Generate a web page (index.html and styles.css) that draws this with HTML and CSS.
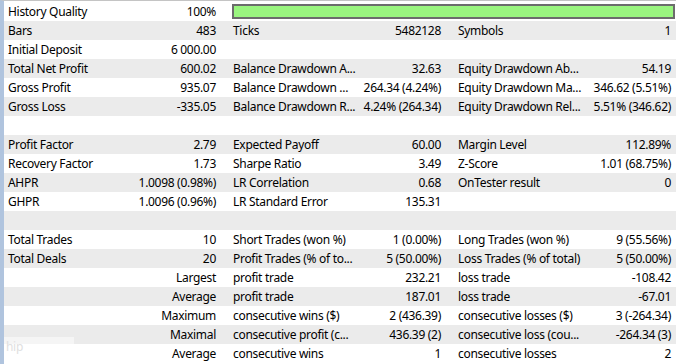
FILE: index.html
```html
<!DOCTYPE html>
<html>
<head>
<meta charset="utf-8">
<link rel="stylesheet" href="styles.css">
</head>
<body>
<div class="report">
  <div class="row">
    <div class="lbl">History Quality</div><div class="val">100%</div>
    <div class="quality"><div class="quality-fill" style="width:100%"></div></div>
  </div>
  <div class="row">
    <div class="lbl">Bars</div><div class="val">483</div>
    <div class="lbl">Ticks</div><div class="val">5482128</div>
    <div class="lbl">Symbols</div><div class="val last">1</div>
  </div>
  <div class="row">
    <div class="lbl">Initial Deposit</div><div class="val">6 000.00</div>
    <div class="lbl"></div><div class="val"></div>
    <div class="lbl"></div><div class="val last"></div>
  </div>
  <div class="row">
    <div class="lbl">Total Net Profit</div><div class="val">600.02</div>
    <div class="lbl">Balance Drawdown A...</div><div class="val">32.63</div>
    <div class="lbl">Equity Drawdown Ab...</div><div class="val last">54.19</div>
  </div>
  <div class="row">
    <div class="lbl">Gross Profit</div><div class="val">935.07</div>
    <div class="lbl">Balance Drawdown ...</div><div class="val">264.34 (4.24%)</div>
    <div class="lbl">Equity Drawdown Ma...</div><div class="val last">346.62 (5.51%)</div>
  </div>
  <div class="row">
    <div class="lbl">Gross Loss</div><div class="val">-335.05</div>
    <div class="lbl">Balance Drawdown R...</div><div class="val">4.24% (264.34)</div>
    <div class="lbl">Equity Drawdown Rel...</div><div class="val last">5.51% (346.62)</div>
  </div>
  <div class="row">
    <div class="lbl"></div><div class="val"></div>
    <div class="lbl"></div><div class="val"></div>
    <div class="lbl"></div><div class="val last"></div>
  </div>
  <div class="row">
    <div class="lbl">Profit Factor</div><div class="val">2.79</div>
    <div class="lbl">Expected Payoff</div><div class="val">60.00</div>
    <div class="lbl">Margin Level</div><div class="val last">112.89%</div>
  </div>
  <div class="row">
    <div class="lbl">Recovery Factor</div><div class="val">1.73</div>
    <div class="lbl">Sharpe Ratio</div><div class="val">3.49</div>
    <div class="lbl">Z-Score</div><div class="val last">1.01 (68.75%)</div>
  </div>
  <div class="row">
    <div class="lbl">AHPR</div><div class="val">1.0098 (0.98%)</div>
    <div class="lbl">LR Correlation</div><div class="val">0.68</div>
    <div class="lbl">OnTester result</div><div class="val last">0</div>
  </div>
  <div class="row">
    <div class="lbl">GHPR</div><div class="val">1.0096 (0.96%)</div>
    <div class="lbl">LR Standard Error</div><div class="val">135.31</div>
    <div class="lbl"></div><div class="val last"></div>
  </div>
  <div class="row">
    <div class="lbl"></div><div class="val"></div>
    <div class="lbl"></div><div class="val"></div>
    <div class="lbl"></div><div class="val last"></div>
  </div>
  <div class="row">
    <div class="lbl">Total Trades</div><div class="val">10</div>
    <div class="lbl">Short Trades (won %)</div><div class="val">1 (0.00%)</div>
    <div class="lbl">Long Trades (won %)</div><div class="val last">9 (55.56%)</div>
  </div>
  <div class="row">
    <div class="lbl">Total Deals</div><div class="val">20</div>
    <div class="lbl">Profit Trades (% of to...</div><div class="val">5 (50.00%)</div>
    <div class="lbl">Loss Trades (% of total)</div><div class="val last">5 (50.00%)</div>
  </div>
  <div class="row">
    <div class="lbl"></div><div class="val">Largest</div>
    <div class="lbl">profit trade</div><div class="val">232.21</div>
    <div class="lbl">loss trade</div><div class="val last">-108.42</div>
  </div>
  <div class="row">
    <div class="lbl"></div><div class="val">Average</div>
    <div class="lbl">profit trade</div><div class="val">187.01</div>
    <div class="lbl">loss trade</div><div class="val last">-67.01</div>
  </div>
  <div class="row">
    <div class="lbl"></div><div class="val">Maximum</div>
    <div class="lbl">consecutive wins ($)</div><div class="val">2 (436.39)</div>
    <div class="lbl">consecutive losses ($)</div><div class="val last">3 (-264.34)</div>
  </div>
  <div class="row">
    <div class="lbl"></div><div class="val">Maximal</div>
    <div class="lbl">consecutive profit (c...</div><div class="val">436.39 (2)</div>
    <div class="lbl">consecutive loss (cou...</div><div class="val last">-264.34 (3)</div>
  </div>
  <div class="row">
    <div class="lbl"></div><div class="val">Average</div>
    <div class="lbl">consecutive wins</div><div class="val">1</div>
    <div class="lbl">consecutive losses</div><div class="val last">2</div>
  </div>
  <div class="ghost">hip</div>
</div>
</body>
</html>
```
FILE: styles.css
```css
html, body {
  margin: 0;
  padding: 0;
  background: #ffffff;
}
body {
  width: 676px;
  height: 364px;
  overflow: hidden;
  font-family: "Noto Sans", "Open Sans", sans-serif;
  font-size: 12px;
  letter-spacing: -0.3px;
  color: #000000;
}
.report {
  position: relative;
  border-top: 1px solid #c4c4c4;
  border-left: 4px solid #b0c4de;
  padding-top: 1px;
  box-sizing: border-box;
  height: 364px;
}
.row {
  display: grid;
  grid-template-columns: 133px 88px 137px 88px 137px 89px;
  height: 19px;
  align-items: center;
  white-space: nowrap;
}
.row:nth-child(even) {
  background: #ebebeb;
}
.lbl {
  padding-left: 4px;
  overflow: hidden;
  line-height: 19px;
  height: 19px;
}
.lbl + .val + .lbl {
  padding-left: 8px;
}
.val {
  text-align: right;
  padding-right: 9px;
  line-height: 19px;
  height: 19px;
  overflow: hidden;
}
.val.last {
  padding-right: 5px;
}
.quality {
  grid-column: 3 / 7;
  height: 15px;
  margin: 0 1px 0 7px;
  box-sizing: border-box;
  border: 2px solid #6c6c6c;
  background: #ffffff;
}
.quality-fill {
  height: 100%;
  background: #9af57f;
}
.ghost {
  position: absolute;
  left: 0;
  top: 336px;
  width: 70px;
  height: 20px;
  background: rgba(255, 255, 255, 0.5);
  color: #e0e0e0;
  line-height: 20px;
  padding-left: 2px;
  box-sizing: border-box;
}
```
